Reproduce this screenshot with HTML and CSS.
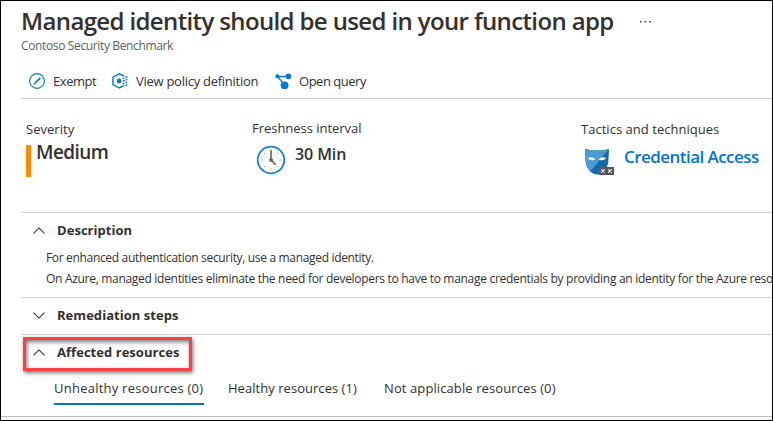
FILE: index.html
```html
<!DOCTYPE html>
<html lang="en">
<head>
<meta charset="utf-8">
<title>Managed identity should be used in your function app</title>
<link rel="stylesheet" href="styles.css">
</head>
<body>
<main class="blade">
  <header class="heading">
    <div class="title-row">
      <h1 class="title">Managed identity should be used in your function app</h1>
      <svg class="more" width="14" height="4" viewBox="0 0 14 4" fill="#444"><path d="M2 1h1.600v1.600H2zM6.600 1h1.600v1.600H6.600zM11.200 1h1.600v1.600h-1.600z"/></svg>
    </div>
    <p class="subtitle">Contoso Security Benchmark</p>
  </header>

  <nav class="toolbar">
    <a class="command exempt">
      <svg width="16" height="16" viewBox="0 0 16 16" fill="none" stroke="#0078d4"><circle cx="8" cy="8" r="7.4" stroke-width="1.1"/><path d="M4.7 11.3l.6-1.6 5.4-5.3 1 1-5.4 5.3z" fill="#0078d4" stroke-width=".4"/></svg>
      <span>Exempt</span>
    </a>
    <a class="command policy">
      <svg width="16" height="16" viewBox="0 0 16 16" fill="#0078d4"><path d="M12 3L7.2.8 1 4.2v7.4L7.2 15l4.8-2.4" fill="none" stroke="#0078d4" stroke-width="1.4"/><circle cx="7.2" cy="8" r="2.4"/><path d="M10.6 4.4h1.7v1.7h-1.7zM13.5 3h1.7v1.7h-1.7zM11 7.1h1.7v1.7H11zM13.7 6h1.5v1.6h-1.5zM13.7 8.8h1.5v1.6h-1.5zM10.6 9.9h1.7v1.7h-1.7zM13.5 11.5h1.7v1.7h-1.7z"/></svg>
      <span>View policy definition</span>
    </a>
    <a class="command query">
      <svg width="17" height="17" viewBox="0 0 17 17" fill="#0078d4"><path d="M2.7 3.500h11M2.7 3.500L9.500 12" stroke="#0078d4" stroke-width="1.300"/><circle cx="2.400" cy="3.300" r="2.100"/><circle cx="13.400" cy="3.300" r="2.900"/><circle cx="9.600" cy="12.300" r="3.900"/></svg>
      <span>Open query</span>
    </a>
  </nav>

  <section class="facts">
    <div class="fact severity">
      <div class="label">Severity</div>
      <div class="fact-value"><i class="bar"></i><strong class="medium">Medium</strong></div>
    </div>
    <div class="fact freshness">
      <div class="label">Freshness interval</div>
      <div class="fact-value">
        <svg class="clock" width="30" height="30" viewBox="0 0 30 30" fill="none"><circle cx="15" cy="15" r="13.3" fill="#fff" stroke="#1b80dc" stroke-width="1.8"/><path d="M15 23.5v1.8M5 15h1.6M23.4 15H25M7.9 7.9l1 1M22.1 7.9l-1 1M7.9 22.1l1-1M22.1 22.1l-1-1" stroke="#999"/><path d="M15 5.2V15l4.8 4.8" stroke="#6b6b6b" stroke-width="1.7"/><circle cx="15" cy="15" r="2" fill="#6b6b6b"/></svg>
        <strong class="minutes">30 Min</strong>
      </div>
    </div>
    <div class="fact tactics">
      <div class="label">Tactics and techniques</div>
      <div class="fact-value">
        <svg class="mask" width="30" height="27" viewBox="0 0 30 27"><path d="M0 0Q12 3 24 0L23.3 13C22.5 20 17 25.5 12 25.5S1.5 20 .7 13z" fill="#1768a9"/><path d="M0 0Q12 3 24 0L5.2 22.5Q1.2 18 .7 13z" fill="#4a9bd0"/><path d="M2.6 9.2Q6.5 6.6 10.4 10.4 6 12.6 2.6 9.2zM21.4 9.2Q17.5 6.6 13.6 10.4 18 12.6 21.4 9.2z" fill="#fff"/><path d="M14 18h15v8H14z" fill="#505761"/><path d="M16.3 20.3l3.4 3.4m0-3.4l-3.4 3.4M23.3 20.3l3.4 3.4m0-3.4l-3.4 3.4" stroke="#fff" stroke-width="1.2"/></svg>
        <a class="access">Credential Access</a>
      </div>
    </div>
  </section>

  <section class="panel">
    <h2 class="panel-head"><svg class="chevron" width="12" height="7" viewBox="0 0 12 7"><path d="M.5 6.3L6 .9l5.5 5.4"/></svg><span>Description</span></h2>
    <div class="description">
      <p class="line-one">For enhanced authentication security, use a managed identity.</p>
      <p class="line-two">On Azure, managed identities eliminate the need for developers to have to manage credentials by providing an identity for the Azure reso</p>
    </div>
  </section>
  <section class="panel remediation">
    <h2 class="panel-head"><svg class="chevron" width="12" height="7" viewBox="0 0 12 7"><path d="M.5.7L6 6.1 11.5.7"/></svg><span>Remediation steps</span></h2>
  </section>
  <section class="panel affected">
    <h2 class="panel-head"><svg class="chevron" width="12" height="7" viewBox="0 0 12 7"><path d="M.5 6.3L6 .9l5.5 5.4"/></svg><span>Affected resources</span></h2>
    <div class="highlight"></div>
    <div class="tabs">
      <a class="tab active">Unhealthy resources (0)</a>
      <a class="tab healthy">Healthy resources (1)</a>
      <a class="tab na">Not applicable resources (0)</a>
    </div>
  </section>
  <div class="scroll-edge"></div>
</main>
</body>
</html>
```
FILE: styles.css
```css
* { box-sizing: border-box; }
body { margin: 0; font: 13px/18px "Open Sans", "Noto Sans", sans-serif; color: #323130; background: #fff; }
h1, h2, p { margin: 0; }
svg { display: block; flex: none; }
.blade { width: 773px; height: 421px; border: 1px solid #000; padding-left: 20px; overflow: hidden; white-space: nowrap; }
.heading { padding-top: 4px; }
.title-row { display: flex; height: 33px; }
.title { width: 617px; font-size: 24px; line-height: 32px; font-weight: 600; letter-spacing: -.63px; }
.more { margin-top: 15px; }
.subtitle { font-size: 12px; line-height: 16px; color: #605e5c; letter-spacing: -.36px; }
.toolbar { display: flex; align-items: center; height: 35px; margin-top: 10px; padding-left: 8px; border-bottom: 1px solid #d2d2d2; }
.command { display: flex; align-items: center; }
.exempt { width: 83px; gap: 8px; letter-spacing: -.45px; }
.policy { width: 163px; gap: 8px; letter-spacing: -.27px; }
.query { gap: 7px; letter-spacing: -.48px; }
.facts { display: grid; grid-template-columns: 226px 329px 1fr; height: 114px; padding: 21px 0 0 5px; border-bottom: 1px solid #d2d2d2; }
.fact-value { display: flex; }
.label { letter-spacing: .03px; }
.freshness .label { margin-top: -1px; letter-spacing: -.03px; }
.bar { width: 5px; height: 32px; margin-top: 7px; background: #ff8c00; }
.medium { margin: 1px 0 0 5px; font-size: 19px; line-height: 26px; font-weight: 600; letter-spacing: -.6px; }
.clock { margin: 8px 9px 0 4px; }
.minutes { margin-top: 6px; font-size: 16px; line-height: 22px; font-weight: 600; letter-spacing: -.1px; }
.mask { margin: 11px 9px 0 4px; }
.access { margin-top: 7px; font-size: 17px; line-height: 24px; font-weight: 600; color: #0073d8; letter-spacing: -.55px; }
.panel { height: 85px; border-bottom: 1px solid #d2d2d2; }
.panel-head { display: flex; align-items: center; gap: 12px; height: 34px; padding-left: 12px; font-size: 13px; line-height: 18px; font-weight: 700; letter-spacing: .04px; }
.chevron { fill: none; stroke: #323130; stroke-width: 1.1; }
.description { padding-left: 25px; font-size: 12px; line-height: 21px; }
.line-one { letter-spacing: -.33px; }
.line-two { letter-spacing: -.3px; }
.remediation { height: 37px; }
.affected { position: relative; height: 81px; border: 0; }
.highlight { position: absolute; left: 2px; top: 2px; width: 169px; height: 34px; border: 3px solid #f94242; box-shadow: 1px 2px 4px #0008, inset 1px 2px 4px #0008; }
.tabs { display: flex; padding: 2px 0 0 33px; }
.tab { height: 34px; padding-top: 8px; }
.active { width: 150px; margin-right: 24px; border-bottom: 2px solid #0073d0; font-weight: 500; letter-spacing: .24px; }
.healthy { width: 156px; letter-spacing: .04px; }
.na { letter-spacing: .1px; }
.scroll-edge { height: 4px; margin-left: -20px; border-top: 1px solid #bdbdbd; background: #f7f7f7; }
```
